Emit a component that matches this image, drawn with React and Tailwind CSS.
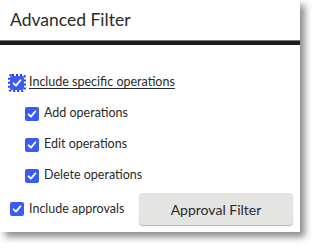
import React from 'react';

function Box({ focus }) {
  return (
    <span className={`relative flex h-[14px] w-[14px] shrink-0 items-center justify-center rounded-[2px] bg-[#3a5cf5] ${focus ? 'outline-2 outline-dotted outline-offset-0 outline-[#2f3fe8]' : ''}`}>
      <svg viewBox="0 0 14 14" className="h-[12px] w-[12px]">
        <path d="M3 7.4 L5.8 10 L11 3.8" fill="none" stroke="white" strokeWidth="2.2" strokeLinecap="round" strokeLinejoin="round" />
      </svg>
    </span>
  );
}

function Row({ indent, focus, underline, children }) {
  return (
    <label className={`flex h-[31px] items-center gap-[5px] ${indent ? 'pl-[25px]' : 'pl-[10px]'}`}>
      <Box focus={focus} />
      <span className={`text-[12.5px] text-[#2a2a2a] ${underline ? 'underline underline-offset-2' : ''}`}>{children}</span>
    </label>
  );
}

export default function App() {
  return (
    <div className="h-[249px] w-[316px] bg-white font-['Lato','Liberation_Sans',sans-serif]">
      <div className="w-[300px] bg-white pb-[7px] shadow-[5px_5px_7px_rgba(0,0,0,0.45)]">
        <div className="flex h-[40px] items-center pl-[10px] text-[17.5px] text-[#2a2a2a]">Advanced Filter</div>
        <div className="h-[1px] bg-[#777]" />
        <div className="h-[4px] bg-[#1c1c1c]" />
        <div className="pt-[22px]">
          <Row focus underline>Include specific operations</Row>
          <Row indent>Add operations</Row>
          <Row indent>Edit operations</Row>
          <Row indent>Delete operations</Row>
          <div className="mt-[2px] flex items-center">
            <label className="flex w-[139px] items-center gap-[5px] pl-[10px]">
              <Box />
              <span className="text-[12.5px] text-[#2a2a2a]">Include approvals</span>
            </label>
            <button className="h-[32px] w-[154px] rounded-[4px] bg-[#e4e4e2] text-[14px] text-[#2a2a2a] shadow-[0_1px_1px_rgba(0,0,0,0.3)]">
              Approval Filter
            </button>
          </div>
        </div>
      </div>
    </div>
  );
}
